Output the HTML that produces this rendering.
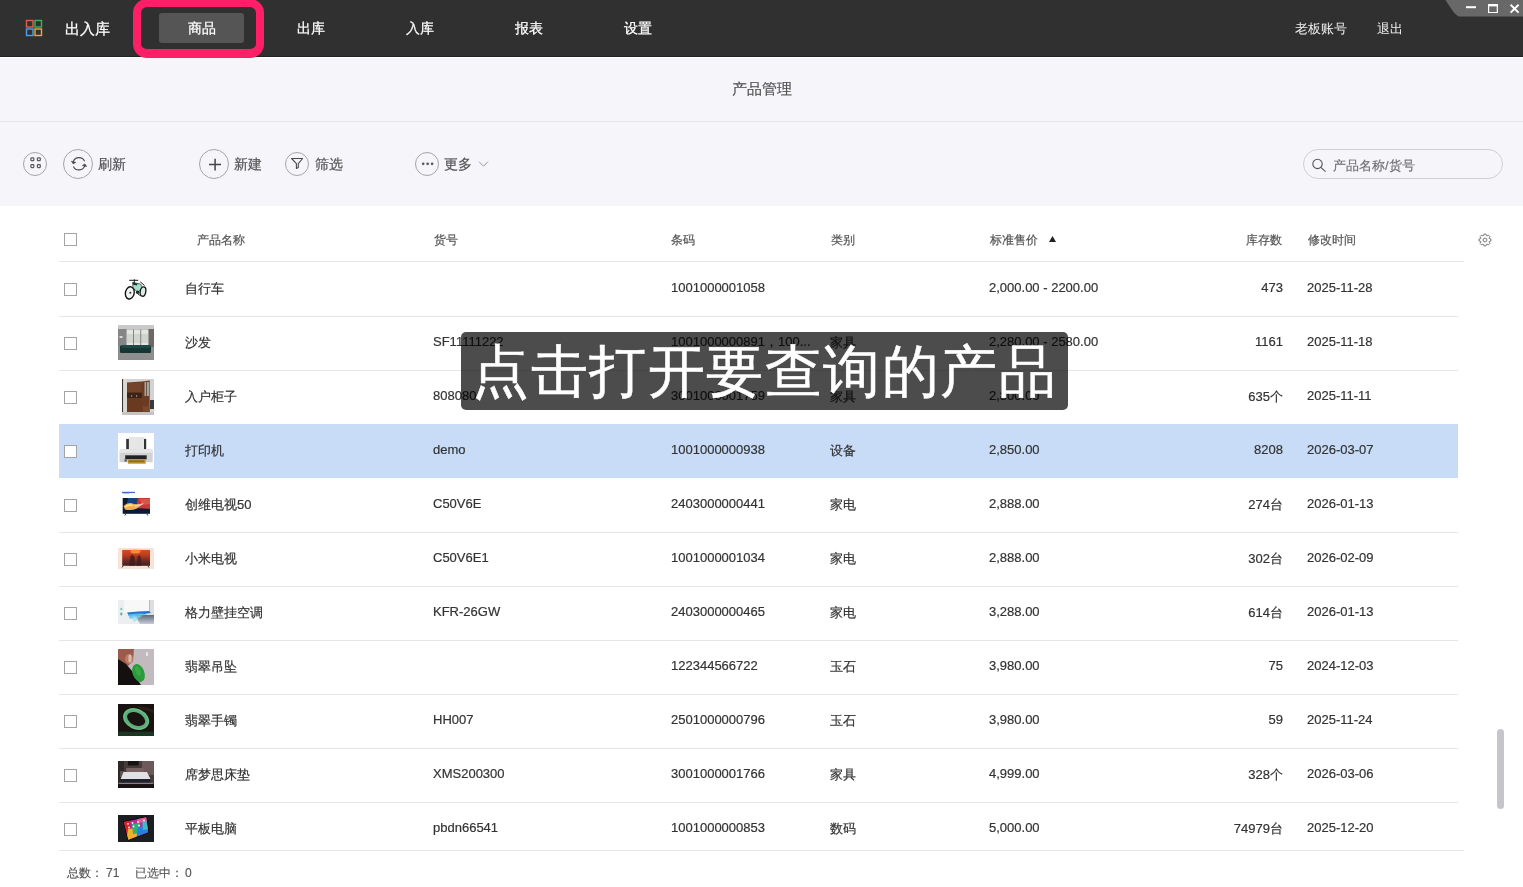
<!DOCTYPE html>
<html><head><meta charset="utf-8">
<style>
html,body{margin:0;padding:0;}
body{width:1523px;height:887px;overflow:hidden;position:relative;background:#fff;font-family:"Liberation Sans",sans-serif;color:#333;}
.a{position:absolute;white-space:nowrap;line-height:1;}
#wrap{position:absolute;left:0;top:0;width:1523px;height:887px;will-change:transform;}
#hdr{position:absolute;left:0;top:0;width:1523px;height:56px;background:#303030;border-bottom:1px solid #222;}
#hl{position:absolute;left:0;top:57px;width:1523px;height:1px;background:#fff;}
#sub{position:absolute;left:0;top:58px;width:1523px;height:148px;background:#f5f5fa;}
#subline{position:absolute;left:0;top:121px;width:1523px;height:1px;background:#e4e4e9;}
.nav{color:#fff;font-size:14px;-webkit-text-stroke:0.25px #fff;}
.tb{color:#555;font-size:14px;-webkit-text-stroke:0.2px #555;}
.circ{position:absolute;border:1px solid #a6a6a6;border-radius:50%;box-sizing:border-box;}
.th{color:#555;font-size:12px;-webkit-text-stroke:0.2px #555;}
.td{color:#333;font-size:13px;-webkit-text-stroke:0.2px #333;}
.cb{position:absolute;left:64px;width:13px;height:13px;border:1px solid #a4a4a4;box-sizing:border-box;background:#fff;}
.rl{position:absolute;left:59px;width:1399px;height:1px;background:#e6e6e6;}
.thumb{position:absolute;overflow:hidden;}
</style></head><body><div id="wrap">
<div id="hdr"></div><div id="hl"></div>
<!-- logo -->
<svg class="a" style="left:25px;top:19px" width="18" height="18" viewBox="0 0 18 18">
<rect x="1.5" y="1.5" width="6.5" height="6.5" fill="none" stroke="#e0604f" stroke-width="1.4"/>
<rect x="10" y="1.5" width="6.5" height="6.5" fill="none" stroke="#3cb454" stroke-width="1.4"/>
<rect x="1.5" y="10" width="6.5" height="6.5" fill="none" stroke="#4aa0ea" stroke-width="1.4"/>
<rect x="10" y="10" width="6.5" height="6.5" fill="none" stroke="#e8a446" stroke-width="1.4"/>
</svg>
<div class="a nav" style="left:65px;top:21px;font-size:15px">出入库</div>
<!-- pink highlight -->
<div class="a" style="left:133px;top:-1px;width:131px;height:58.5px;box-sizing:border-box;border:8px solid #fe1f66;border-bottom-width:9px;border-radius:14px;"></div>
<div class="a" style="left:159px;top:13px;width:85px;height:30px;background:#555;border-radius:3px;"></div>
<div class="a nav" style="left:188px;top:21px">商品</div>
<div class="a nav" style="left:297px;top:21px">出库</div>
<div class="a nav" style="left:406px;top:21px">入库</div>
<div class="a nav" style="left:515px;top:21px">报表</div>
<div class="a nav" style="left:624px;top:21px">设置</div>
<div class="a nav" style="left:1295px;top:22px;font-size:13px;-webkit-text-stroke:0;color:#f0f0f0">老板账号</div>
<div class="a nav" style="left:1377px;top:22px;font-size:13px;-webkit-text-stroke:0;color:#f0f0f0">退出</div>

<div id="sub"></div><div id="subline"></div>
<div class="a" style="left:732px;top:81px;font-size:15px;color:#555;-webkit-text-stroke:0.2px #555">产品管理</div>

<!-- toolbar -->
<div class="circ" style="left:23px;top:152px;width:24px;height:24px"></div>
<div class="circ" style="left:63px;top:149px;width:30px;height:30px"></div>
<div class="a tb" style="left:98px;top:157px">刷新</div>
<div class="circ" style="left:199px;top:149px;width:30px;height:30px"></div>
<div class="a tb" style="left:234px;top:157px">新建</div>
<div class="circ" style="left:285px;top:152px;width:24px;height:24px"></div>
<div class="a tb" style="left:315px;top:157px">筛选</div>
<div class="circ" style="left:415px;top:152px;width:24px;height:24px"></div>
<div class="a tb" style="left:444px;top:157px">更多</div>
<div class="a" style="left:1303px;top:149px;width:200px;height:30px;box-sizing:border-box;border:1px solid #cfcfd4;border-radius:15px;"></div>
<div class="a" style="left:1333px;top:159px;font-size:13px;color:#707070;-webkit-text-stroke:0.15px #707070">产品名称/货号</div>


<!-- icons -->
<svg class="a" style="left:23px;top:152px" width="24" height="24" viewBox="0 0 24 24" fill="none" stroke="#5c5c5c" stroke-width="1.25">
<rect x="7.9" y="5.8" width="2.9" height="2.9" rx="0.7"/><rect x="14.4" y="5.8" width="2.9" height="2.9" rx="0.7"/>
<rect x="7.9" y="12.6" width="2.9" height="2.9" rx="0.7"/><rect x="14.4" y="12.6" width="2.9" height="2.9" rx="0.7"/>
</svg>
<svg class="a" style="left:63px;top:149px" width="30" height="30" viewBox="0 0 30 30" fill="none" stroke="#4a4a4a" stroke-width="1.15">
<path d="M10.2 12.7 A6.2 6.2 0 0 1 21.6 12.2"/>
<path d="M10.4 17.4 A6.2 6.2 0 0 0 21.8 16.9"/>
<path d="M8.45 12.2 L12.85 13.35 L10.15 14.9 Z" fill="#444" stroke-width="0.6"/>
<path d="M23.67 17.6 L19.28 16.57 L21.98 14.9 Z" fill="#444" stroke-width="0.6"/>
</svg>
<svg class="a" style="left:199px;top:149px" width="30" height="30" viewBox="0 0 30 30" fill="none" stroke="#444" stroke-width="1.5">
<path d="M10 15.6 H22 M16.1 9.8 V21.6"/>
</svg>
<svg class="a" style="left:285px;top:152px" width="24" height="24" viewBox="0 0 24 24" fill="none" stroke="#4a4a4a" stroke-width="1.1" stroke-linejoin="round">
<path d="M6.6 6.5 H17.6 L13.3 11.6 V15.4 L11.4 16.4 V11.6 Z"/>
</svg>
<svg class="a" style="left:415px;top:152px" width="24" height="24" viewBox="0 0 24 24" fill="#5a5a5a">
<circle cx="8.2" cy="11.8" r="1.35"/><circle cx="12.65" cy="11.8" r="1.35"/><circle cx="17.1" cy="11.8" r="1.35"/>
</svg>
<svg class="a" style="left:476px;top:158px" width="14" height="10" viewBox="0 0 14 10" fill="none" stroke="#999" stroke-width="1">
<path d="M3 3.7 L7.5 8.2 L12 3.7"/>
</svg>
<svg class="a" style="left:1303px;top:150px" width="30" height="30" viewBox="0 0 30 30" fill="none" stroke="#555" stroke-width="1.1">
<circle cx="14.5" cy="13.9" r="4.7"/><path d="M17.9 17.3 L22.5 21.7"/>
</svg>
<svg class="a" style="left:1473px;top:228px" width="24" height="24" viewBox="0 0 24 24" fill="none" stroke="#777" stroke-width="1">
<path d="M16.27 10.58 L17.91 10.98 L17.91 13.02 L16.27 13.42 L16.03 14.01 L16.90 15.46 L15.46 16.90 L14.01 16.03 L13.42 16.27 L13.02 17.91 L10.98 17.91 L10.58 16.27 L9.99 16.03 L8.54 16.90 L7.10 15.46 L7.97 14.01 L7.73 13.42 L6.09 13.02 L6.09 10.98 L7.73 10.58 L7.97 9.99 L7.10 8.54 L8.54 7.10 L9.99 7.97 L10.58 7.73 L10.98 6.09 L13.02 6.09 L13.42 7.73 L14.01 7.97 L15.46 7.10 L16.90 8.54 L16.03 9.99 Z"/><circle cx="12" cy="12" r="1.9"/>
</svg>
<!-- window ctrl icons -->
<svg class="a" style="left:1440px;top:0" width="83" height="18" viewBox="0 0 83 18">
<path d="M5.4 0 L10.9 8.2 Q13.6 13.3 18.5 16.6 L83 16.6 L83 0 Z" fill="#686868"/>
<rect x="26" y="6.2" width="10" height="2" fill="#fff"/>
<path d="M48.6 4.6 H57.3 V12.5 H48.6 Z" fill="none" stroke="#fff" stroke-width="1.2"/>
<rect x="48" y="4" width="9.9" height="2.4" fill="#fff"/>
<path d="M70.6 4.7 L78.6 12.6 M78.6 4.7 L70.6 12.6" stroke="#fff" stroke-width="1.9"/>
</svg>


<!-- table header -->
<div class="cb" style="top:233px"></div>
<div class="a th" style="left:197px;top:234px">产品名称</div>
<div class="a th" style="left:434px;top:234px">货号</div>
<div class="a th" style="left:671px;top:234px">条码</div>
<div class="a th" style="left:831px;top:234px">类别</div>
<div class="a th" style="left:990px;top:234px">标准售价</div>
<div class="a th" style="left:1246px;top:234px">库存数</div>
<div class="a th" style="left:1308px;top:234px">修改时间</div>
<div class="rl" style="top:261px;width:1405px"></div>

<div id="rows">
<div class="cb" style="top:283px"></div>
<div class="a td" style="left:185px;top:282px">自行车</div>
<div class="a td" style="left:671px;top:281px">1001000001058</div>
<div class="a td" style="left:989px;top:281px">2,000.00 - 2200.00</div>
<div class="a td" style="right:240px;top:281px">473</div>
<div class="a td" style="left:1307px;top:281px">2025-11-28</div>
<div class="rl" style="top:316px"></div>
<div class="cb" style="top:337px"></div>
<div class="a td" style="left:185px;top:336px">沙发</div>
<div class="a td" style="left:433px;top:335px">SF11111222</div>
<div class="a td" style="left:671px;top:335px">1001000000891，100...</div>
<div class="a td" style="left:830px;top:336px">家具</div>
<div class="a td" style="left:989px;top:335px">2,280.00 - 2580.00</div>
<div class="a td" style="right:240px;top:335px">1161</div>
<div class="a td" style="left:1307px;top:335px">2025-11-18</div>
<div class="rl" style="top:370px"></div>
<div class="cb" style="top:391px"></div>
<div class="a td" style="left:185px;top:390px">入户柜子</div>
<div class="a td" style="left:433px;top:389px">808080</div>
<div class="a td" style="left:671px;top:389px">3001000001759</div>
<div class="a td" style="left:830px;top:390px">家具</div>
<div class="a td" style="left:989px;top:389px">2,800.00</div>
<div class="a td" style="right:240px;top:390px">635个</div>
<div class="a td" style="left:1307px;top:389px">2025-11-11</div>
<div class="a" style="left:59px;top:424px;width:1399px;height:54px;background:#c8dcf8"></div>
<div class="cb" style="top:445px"></div>
<div class="a td" style="left:185px;top:444px">打印机</div>
<div class="a td" style="left:433px;top:443px">demo</div>
<div class="a td" style="left:671px;top:443px">1001000000938</div>
<div class="a td" style="left:830px;top:444px">设备</div>
<div class="a td" style="left:989px;top:443px">2,850.00</div>
<div class="a td" style="right:240px;top:443px">8208</div>
<div class="a td" style="left:1307px;top:443px">2026-03-07</div>
<div class="cb" style="top:499px"></div>
<div class="a td" style="left:185px;top:498px">创维电视50</div>
<div class="a td" style="left:433px;top:497px">C50V6E</div>
<div class="a td" style="left:671px;top:497px">2403000000441</div>
<div class="a td" style="left:830px;top:498px">家电</div>
<div class="a td" style="left:989px;top:497px">2,888.00</div>
<div class="a td" style="right:240px;top:498px">274台</div>
<div class="a td" style="left:1307px;top:497px">2026-01-13</div>
<div class="rl" style="top:532px"></div>
<div class="cb" style="top:553px"></div>
<div class="a td" style="left:185px;top:552px">小米电视</div>
<div class="a td" style="left:433px;top:551px">C50V6E1</div>
<div class="a td" style="left:671px;top:551px">1001000001034</div>
<div class="a td" style="left:830px;top:552px">家电</div>
<div class="a td" style="left:989px;top:551px">2,888.00</div>
<div class="a td" style="right:240px;top:552px">302台</div>
<div class="a td" style="left:1307px;top:551px">2026-02-09</div>
<div class="rl" style="top:586px"></div>
<div class="cb" style="top:607px"></div>
<div class="a td" style="left:185px;top:606px">格力壁挂空调</div>
<div class="a td" style="left:433px;top:605px">KFR-26GW</div>
<div class="a td" style="left:671px;top:605px">2403000000465</div>
<div class="a td" style="left:830px;top:606px">家电</div>
<div class="a td" style="left:989px;top:605px">3,288.00</div>
<div class="a td" style="right:240px;top:606px">614台</div>
<div class="a td" style="left:1307px;top:605px">2026-01-13</div>
<div class="rl" style="top:640px"></div>
<div class="cb" style="top:661px"></div>
<div class="a td" style="left:185px;top:660px">翡翠吊坠</div>
<div class="a td" style="left:671px;top:659px">122344566722</div>
<div class="a td" style="left:830px;top:660px">玉石</div>
<div class="a td" style="left:989px;top:659px">3,980.00</div>
<div class="a td" style="right:240px;top:659px">75</div>
<div class="a td" style="left:1307px;top:659px">2024-12-03</div>
<div class="rl" style="top:694px"></div>
<div class="cb" style="top:715px"></div>
<div class="a td" style="left:185px;top:714px">翡翠手镯</div>
<div class="a td" style="left:433px;top:713px">HH007</div>
<div class="a td" style="left:671px;top:713px">2501000000796</div>
<div class="a td" style="left:830px;top:714px">玉石</div>
<div class="a td" style="left:989px;top:713px">3,980.00</div>
<div class="a td" style="right:240px;top:713px">59</div>
<div class="a td" style="left:1307px;top:713px">2025-11-24</div>
<div class="rl" style="top:748px"></div>
<div class="cb" style="top:769px"></div>
<div class="a td" style="left:185px;top:768px">席梦思床垫</div>
<div class="a td" style="left:433px;top:767px">XMS200300</div>
<div class="a td" style="left:671px;top:767px">3001000001766</div>
<div class="a td" style="left:830px;top:768px">家具</div>
<div class="a td" style="left:989px;top:767px">4,999.00</div>
<div class="a td" style="right:240px;top:768px">328个</div>
<div class="a td" style="left:1307px;top:767px">2026-03-06</div>
<div class="rl" style="top:802px"></div>
<div class="cb" style="top:823px"></div>
<div class="a td" style="left:185px;top:822px">平板电脑</div>
<div class="a td" style="left:433px;top:821px">pbdn66541</div>
<div class="a td" style="left:671px;top:821px">1001000000853</div>
<div class="a td" style="left:830px;top:822px">数码</div>
<div class="a td" style="left:989px;top:821px">5,000.00</div>
<div class="a td" style="right:240px;top:822px">74979台</div>
<div class="a td" style="left:1307px;top:821px">2025-12-20</div>
</div><!--/rows-->
<!-- thumbnails -->
<svg class="a" style="left:118px;top:274px" width="36" height="30" viewBox="0 0 36 30">
<path d="M14.5 8.5 L22.5 10 L24.5 13.5 L20 18.5 L15 14 Z" fill="#a8dccc" stroke="#1c3a30" stroke-width="0.7"/>
<path d="M15 8.5 L19.5 9.5 L19 11.5 L15 10.8 Z" fill="#173a2e"/>
<ellipse cx="11.8" cy="18.9" rx="4.4" ry="6.2" transform="rotate(12 11.8 18.9)" fill="#eef4f2" stroke="#111" stroke-width="1.4"/>
<ellipse cx="25" cy="17.6" rx="2.8" ry="4.7" transform="rotate(10 25 17.6)" fill="#d8ece6" stroke="#111" stroke-width="1.3"/>
<path d="M11.2 6.3 H20.3 M16.3 5.3 V9.5 M22.3 7.8 L26.5 11.5 M18.5 18 L21.5 21.5" stroke="#1a1a1a" stroke-width="1" fill="none"/>
<circle cx="19.6" cy="18.2" r="1.7" fill="#1a2a24"/>
<circle cx="12.3" cy="18.8" r="1" fill="#333"/>
</svg>
<svg class="a" style="left:118px;top:325px" width="36" height="35" viewBox="0 0 36 35">
<rect width="36" height="35" fill="#8c8c8c"/>
<rect width="36" height="4" fill="#c9c9c9"/>
<rect x="0" y="4" width="8.6" height="17" fill="#858585"/>
<rect x="1.5" y="11" width="3" height="2" fill="#d8d8d8"/>
<rect x="8.6" y="4.4" width="22" height="16" fill="#e4e5e1"/>
<rect x="9" y="9" width="21" height="9" fill="#c8cdc6" opacity="0.7"/>
<rect x="15" y="4.4" width="0.9" height="16" fill="#7a7a78"/><rect x="22.3" y="4.4" width="0.9" height="16" fill="#7a7a78"/>
<rect x="30.6" y="4" width="5.4" height="18" fill="#6c6866"/>
<rect x="2" y="20.5" width="31" height="7.5" rx="1" fill="#163634"/>
<rect x="4" y="20" width="28" height="3" fill="#1f4846"/>
<rect x="0" y="28" width="36" height="7" fill="#8e8e8e"/>
</svg>
<svg class="a" style="left:122px;top:379px" width="32" height="36" viewBox="0 0 32 36">
<rect width="32" height="36" fill="#d4d2d0"/>
<rect x="0" y="0" width="1.2" height="36" fill="#3c3434"/>
<rect x="1.2" y="0" width="4" height="33" fill="#dcd8d4"/>
<path d="M5 3.4 L20 2.5 L28 1.5 L28 33 L5 33 Z" fill="#6c3c22"/>
<rect x="5.5" y="4" width="14" height="9.5" fill="#74432a"/>
<rect x="5" y="13.6" width="14.8" height="5.4" fill="#3a2418"/>
<rect x="9" y="16" width="1.2" height="2" fill="#8a7a70"/><rect x="14" y="16" width="1.2" height="2" fill="#8a7a70"/>
<rect x="5.5" y="19.5" width="14" height="13" fill="#6a3a20"/>
<rect x="22.5" y="3" width="4.5" height="14" fill="#a8a4a0"/>
<rect x="24.2" y="3" width="0.8" height="14" fill="#5a4030"/>
<rect x="27.7" y="2" width="4.3" height="31" fill="#d2d4d4"/>
<rect x="28" y="21" width="4" height="9" fill="#3a3a3c"/>
<rect x="21" y="27.5" width="6.5" height="5" fill="#7a4a2a"/>
<rect x="0" y="33" width="32" height="3" fill="#c4c4c4"/>
</svg>
<svg class="a" style="left:118px;top:433px" width="36" height="36" viewBox="0 0 36 36">
<rect width="36" height="36" fill="#fff"/>
<rect x="10.9" y="3.9" width="15" height="13" fill="#e6e6e6"/>
<rect x="8.2" y="5.9" width="2.7" height="11" fill="#333"/><rect x="26" y="5.9" width="2.2" height="11" fill="#333"/>
<path d="M1.5 18 Q1.5 16.3 3.5 16.3 H32.7 Q34.7 16.3 34.7 18 V29.2 H1.5 Z" fill="#d2d2d2"/>
<rect x="2" y="16.3" width="32" height="3.5" fill="#e6e6e6"/>
<rect x="7.2" y="22.3" width="21.5" height="4" fill="#222"/>
<rect x="9.9" y="26.5" width="17.8" height="4.2" fill="#b8902e"/>
<rect x="11" y="27.5" width="15" height="1.5" fill="#8a6a20"/>
<rect x="6.4" y="26.3" width="2.5" height="2.4" fill="#666"/>
</svg>
<svg class="a" style="left:122px;top:491px" width="28" height="26" viewBox="0 0 28 26">
<rect x="0" y="0.8" width="13" height="1.3" fill="#3a6cc0"/>
<rect x="1" y="2.3" width="6" height="0.6" fill="#8aa0c8"/>
<rect x="0.7" y="7" width="27.3" height="15.8" fill="#0c1a34"/>
<path d="M6 7 L20 7 L14 14 L4 16 Z" fill="#1c4a90" opacity="0.8"/>
<path d="M16 7 L28 7 L28 18 L14 17 Z" fill="#c83838"/>
<path d="M18 8 L28 8 L28 13 L20 14 Z" fill="#e05a50" opacity="0.8"/>
<path d="M1.5 15 Q6 10.5 12 13 L20 13.5 L15 17.5 Q9 20 3 18.5 Z" fill="#f0b050"/>
<path d="M3 16 Q7 13 11 14.5" stroke="#ffe8a8" stroke-width="1.3" fill="none"/>
<path d="M12 14.5 L22 12 L20 14 L13 16 Z" fill="#e8d8e8" opacity="0.8"/>
<path d="M3.5 23 L3 24.5 M25 23 L25.8 24.5" stroke="#222" stroke-width="0.9"/>
</svg>
<svg class="a" style="left:118px;top:548px" width="36" height="21" viewBox="0 0 36 21">
<rect width="36" height="21" fill="#f8e4d6"/>
<defs><linearGradient id="tv2" x1="0" y1="0" x2="0" y2="1"><stop offset="0" stop-color="#e04a1c"/><stop offset="0.35" stop-color="#b83a22"/><stop offset="0.7" stop-color="#6a2a24"/><stop offset="1" stop-color="#3c2228"/></linearGradient></defs>
<rect x="4.2" y="1.9" width="27.8" height="15.9" fill="url(#tv2)"/>
<ellipse cx="17.5" cy="3.5" rx="5" ry="2" fill="#f89a38" opacity="0.85"/>
<path d="M11 17.8 L12.5 8 L14.5 6.5 L16.5 9 L17 17.8 Z" fill="#3e1c1c" opacity="0.8"/>
<path d="M18.5 17.8 L19.5 8.5 L21.5 7 L23 9.5 L23.5 17.8 Z" fill="#3e1c1c" opacity="0.75"/>
<path d="M5 18 L4 19.5 M30 18 L31 19.5" stroke="#333" stroke-width="1"/>
</svg>
<svg class="a" style="left:118px;top:600px" width="36" height="24" viewBox="0 0 36 24">
<defs><linearGradient id="acg" x1="0" y1="0" x2="0" y2="1"><stop offset="0" stop-color="#5e6a78"/><stop offset="1" stop-color="#c8ccd8"/></linearGradient></defs>
<rect width="36" height="24" fill="#eceef0"/>
<rect x="6" y="0" width="25" height="12.5" fill="#f8f8f9"/>
<rect x="31" y="0" width="5" height="16" fill="#dcdee0"/>
<rect x="31" y="0" width="0.8" height="13" fill="#aab0b4"/>
<path d="M17 15 L36 15 L36 24 L22 24 Z" fill="url(#acg)"/>
<path d="M9 12.5 Q20 11 31 11 L33 13 Q20 15 11 16 Z" fill="#2a74cc"/>
<path d="M10 14.5 Q20 13 30 14 Q20 16.5 12 19 Z" fill="#5ac8f0" opacity="0.85"/>
<path d="M13 17 Q18 15.5 24 16 L16 22 Z" fill="#8ad8f4" opacity="0.6"/>
<rect x="2.3" y="7.8" width="2" height="2.5" rx="1" fill="#60d4c4"/>
<rect x="2.3" y="12.5" width="2" height="3" rx="1" fill="#50b8a0"/>
</svg>
<svg class="a" style="left:118px;top:649px" width="36" height="36" viewBox="0 0 36 36">
<rect width="36" height="36" fill="#c2babe"/>
<path d="M0 0 H16 L15 12 L10 17 L0 12 Z" fill="#9a5a4c"/>
<ellipse cx="11" cy="10" rx="4" ry="5" fill="#c07a62"/>
<path d="M0 10 L8 15 L14 22 L23 36 H0 Z" fill="#141010"/>
<ellipse cx="20.5" cy="24" rx="5.8" ry="9.3" transform="rotate(-22 20.5 24)" fill="#2a9a3a"/>
<ellipse cx="20" cy="22" rx="2.5" ry="5" transform="rotate(-22 20 22)" fill="#3cb04a" opacity="0.7"/>
<rect x="10.5" y="5.5" width="3" height="8" rx="1.5" fill="#d8d0c8" opacity="0.8"/>
<rect x="28" y="3" width="2" height="4" fill="#f0eef0" opacity="0.8"/>
</svg>
<svg class="a" style="left:118px;top:704px" width="36" height="32" viewBox="0 0 36 32">
<rect width="36" height="32" fill="#181210"/>
<path d="M20 2 Q30 3 36 6 L36 9 Q28 6 22 5 Z" fill="#3a2420" opacity="0.6"/>
<rect x="0" y="27.7" width="36" height="4.3" fill="#1c3626"/>
<ellipse cx="18.1" cy="15" rx="11.6" ry="8.3" transform="rotate(25 18.1 15)" fill="none" stroke="#5cae78" stroke-width="4"/>
<ellipse cx="18.1" cy="15" rx="12.6" ry="9.3" transform="rotate(25 18.1 15)" fill="none" stroke="#84cc9a" stroke-width="1" opacity="0.5"/>
</svg>
<svg class="a" style="left:118px;top:761px" width="36" height="27" viewBox="0 0 36 27">
<rect width="36" height="27" fill="#463a3a"/>
<rect x="24" y="0" width="12" height="14" fill="#6c5a5a"/>
<rect x="0" y="0" width="6" height="22" fill="#2e2828"/>
<rect x="9.9" y="0" width="10.7" height="4.5" fill="#161212"/>
<rect x="8.2" y="7" width="17.4" height="4" fill="#7a6262"/>
<rect x="2" y="10" width="5" height="6" fill="#5a5252"/>
<path d="M5.5 11 L29 11 L32.5 18 L2.7 18 Z" fill="#e2e2e6"/>
<rect x="2.7" y="18" width="29.8" height="3.8" fill="#20222c"/>
<rect x="1" y="21.8" width="34" height="1.2" fill="#8a8080"/>
<rect x="0" y="23" width="36" height="4" fill="#181212"/>
</svg>
<svg class="a" style="left:118px;top:815px" width="36" height="27" viewBox="0 0 36 27">
<defs><clipPath id="tabc"><path d="M5.9 6.9 L28.2 2.2 L30.2 17.3 L10.4 24.7 Z"/></clipPath></defs>
<rect width="36" height="27" fill="#1c1e22"/>
<path d="M4.9 6.2 L28.8 1.2 L31.2 17.8 L10 25.7 Z" fill="#08080a"/>
<g clip-path="url(#tabc)">
<rect x="0" y="0" width="36" height="27" fill="#c02898"/>
<path d="M0 0 L12 0 L12 27 L0 27 Z" fill="#e01e22"/>
<path d="M10 14 L20 13 L18 27 L8 27 Z" fill="#f0b028"/>
<path d="M14 9 L22 8 L22 18 L15 19 Z" fill="#30b070"/>
<path d="M20 12 L32 10 L32 27 L18 27 Z" fill="#2a7ee0"/>
<path d="M24 6 L32 4 L32 14 L25 15 Z" fill="#40b8c8"/>
<path d="M18 0 L32 0 L32 6 L20 8 Z" fill="#d86090"/>
</g>
<g fill="#fff"><circle cx="10" cy="8.8" r="0.9"/><circle cx="14.5" cy="8" r="0.9"/><circle cx="20" cy="7" r="0.9"/><circle cx="26" cy="5.5" r="0.9"/>
<circle cx="11" cy="12.5" r="0.9"/><circle cx="15.5" cy="11.5" r="0.9"/><circle cx="21" cy="10.5" r="0.9"/></g>
</svg>



<div class="rl" style="top:850px;width:1405px"></div>
<div class="a" style="left:67px;top:867px;font-size:12px;color:#555;-webkit-text-stroke:0.15px #555">总数：</div>
<div class="a" style="left:106px;top:867px;font-size:12px;color:#555;-webkit-text-stroke:0.15px #555">71</div>
<div class="a" style="left:135px;top:867px;font-size:12px;color:#555;-webkit-text-stroke:0.15px #555">已选中：</div>
<div class="a" style="left:185px;top:867px;font-size:12px;color:#555;-webkit-text-stroke:0.15px #555">0</div>
<!-- sort triangle -->
<svg class="a" style="left:1048px;top:235px" width="9" height="8" viewBox="0 0 9 8"><path d="M4.5 1 L8 7 L1 7 Z" fill="#222"/></svg>
<!-- scrollbar -->
<div class="a" style="left:1497px;top:729px;width:7px;height:80px;background:#c6c6ca;border-radius:4px"></div>
<!-- overlay -->
<div class="a" style="left:461px;top:332px;width:607px;height:78px;background:rgba(0,0,0,0.7);border-radius:5px"></div>
<div class="a" style="left:472px;top:343px;font-size:57px;letter-spacing:1.5px;-webkit-text-stroke:0.5px #fff;color:#fff">点击打开要查询的产品</div>
</div></body></html>
